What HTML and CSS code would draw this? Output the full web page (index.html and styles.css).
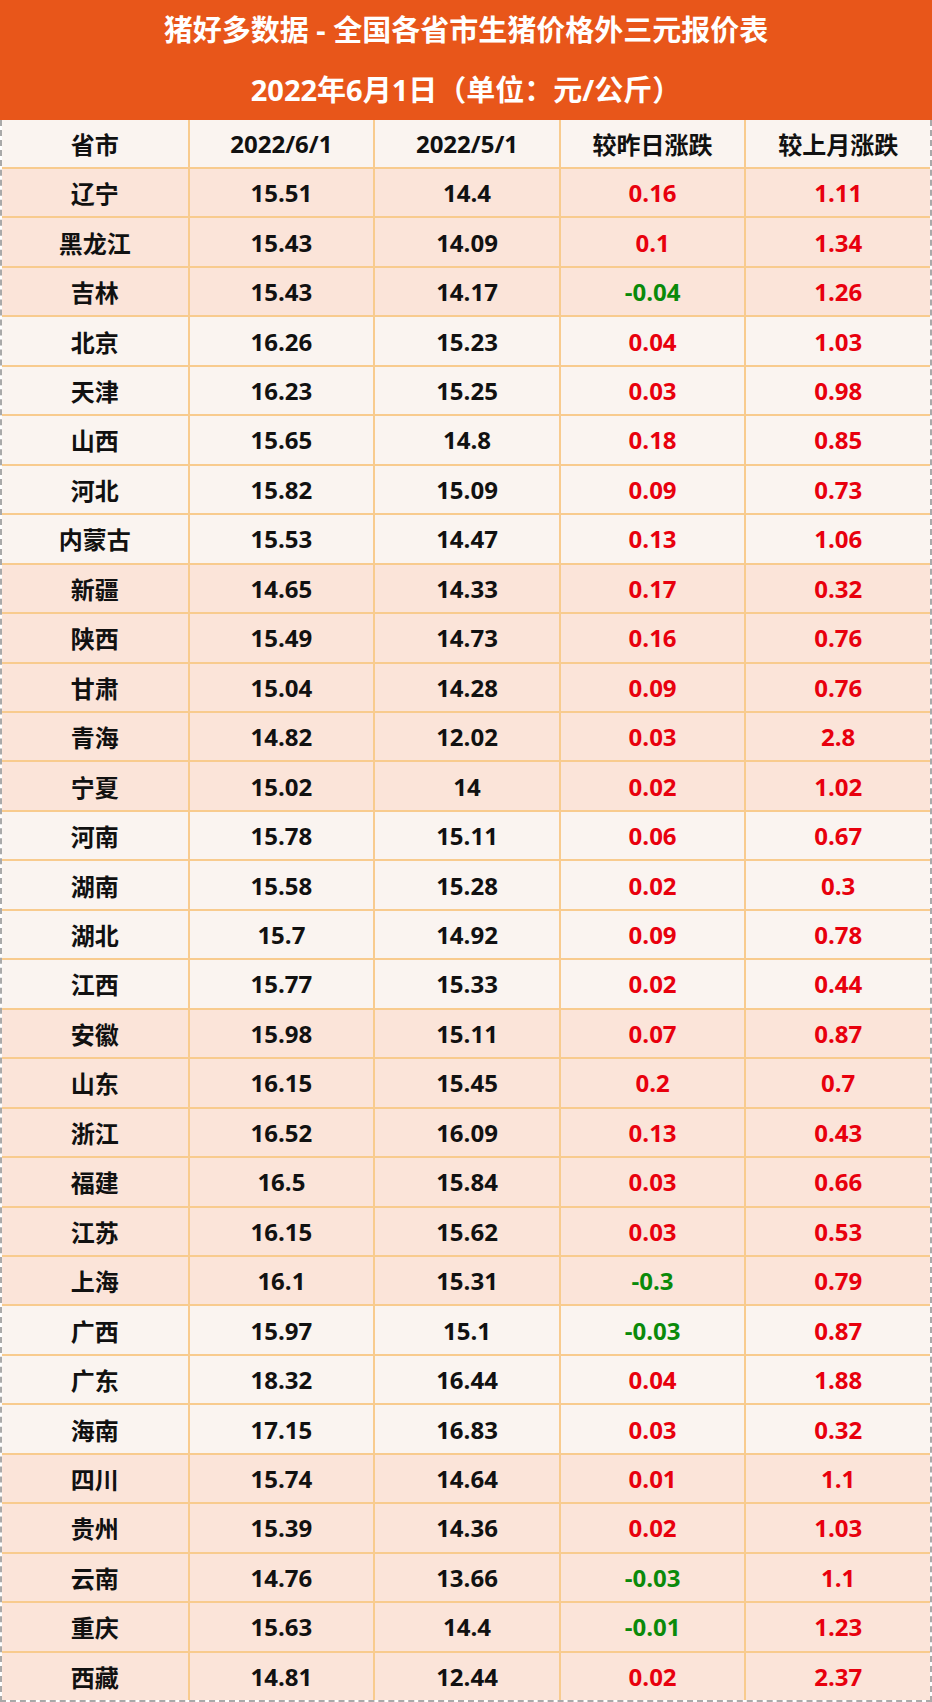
FILE: index.html
```html
<!DOCTYPE html>
<html lang="zh">
<head>
<meta charset="utf-8">
<title>猪好多数据</title>
<link rel="stylesheet" href="styles.css">
</head>
<body>
<div class="sheet">
  <div class="title">
    <div class="title-line">猪好多数据 - 全国各省市生猪价格外三元报价表</div>
    <div class="title-line">2022年6月1日（单位：元/公斤）</div>
  </div>
  <div class="table">
    <div class="row head light"><div class="cell">省市</div><div class="cell">2022/6/1</div><div class="cell">2022/5/1</div><div class="cell">较昨日涨跌</div><div class="cell">较上月涨跌</div></div>
    <div class="row data pink"><div class="cell">辽宁</div><div class="cell">15.51</div><div class="cell">14.4</div><div class="cell up">0.16</div><div class="cell up">1.11</div></div>
    <div class="row data pink"><div class="cell">黑龙江</div><div class="cell">15.43</div><div class="cell">14.09</div><div class="cell up">0.1</div><div class="cell up">1.34</div></div>
    <div class="row data pink"><div class="cell">吉林</div><div class="cell">15.43</div><div class="cell">14.17</div><div class="cell down">-0.04</div><div class="cell up">1.26</div></div>
    <div class="row data light"><div class="cell">北京</div><div class="cell">16.26</div><div class="cell">15.23</div><div class="cell up">0.04</div><div class="cell up">1.03</div></div>
    <div class="row data light"><div class="cell">天津</div><div class="cell">16.23</div><div class="cell">15.25</div><div class="cell up">0.03</div><div class="cell up">0.98</div></div>
    <div class="row data light"><div class="cell">山西</div><div class="cell">15.65</div><div class="cell">14.8</div><div class="cell up">0.18</div><div class="cell up">0.85</div></div>
    <div class="row data light"><div class="cell">河北</div><div class="cell">15.82</div><div class="cell">15.09</div><div class="cell up">0.09</div><div class="cell up">0.73</div></div>
    <div class="row data light"><div class="cell">内蒙古</div><div class="cell">15.53</div><div class="cell">14.47</div><div class="cell up">0.13</div><div class="cell up">1.06</div></div>
    <div class="row data pink"><div class="cell">新疆</div><div class="cell">14.65</div><div class="cell">14.33</div><div class="cell up">0.17</div><div class="cell up">0.32</div></div>
    <div class="row data pink"><div class="cell">陕西</div><div class="cell">15.49</div><div class="cell">14.73</div><div class="cell up">0.16</div><div class="cell up">0.76</div></div>
    <div class="row data pink"><div class="cell">甘肃</div><div class="cell">15.04</div><div class="cell">14.28</div><div class="cell up">0.09</div><div class="cell up">0.76</div></div>
    <div class="row data pink"><div class="cell">青海</div><div class="cell">14.82</div><div class="cell">12.02</div><div class="cell up">0.03</div><div class="cell up">2.8</div></div>
    <div class="row data pink"><div class="cell">宁夏</div><div class="cell">15.02</div><div class="cell">14</div><div class="cell up">0.02</div><div class="cell up">1.02</div></div>
    <div class="row data light"><div class="cell">河南</div><div class="cell">15.78</div><div class="cell">15.11</div><div class="cell up">0.06</div><div class="cell up">0.67</div></div>
    <div class="row data light"><div class="cell">湖南</div><div class="cell">15.58</div><div class="cell">15.28</div><div class="cell up">0.02</div><div class="cell up">0.3</div></div>
    <div class="row data light"><div class="cell">湖北</div><div class="cell">15.7</div><div class="cell">14.92</div><div class="cell up">0.09</div><div class="cell up">0.78</div></div>
    <div class="row data light"><div class="cell">江西</div><div class="cell">15.77</div><div class="cell">15.33</div><div class="cell up">0.02</div><div class="cell up">0.44</div></div>
    <div class="row data pink"><div class="cell">安徽</div><div class="cell">15.98</div><div class="cell">15.11</div><div class="cell up">0.07</div><div class="cell up">0.87</div></div>
    <div class="row data pink"><div class="cell">山东</div><div class="cell">16.15</div><div class="cell">15.45</div><div class="cell up">0.2</div><div class="cell up">0.7</div></div>
    <div class="row data pink"><div class="cell">浙江</div><div class="cell">16.52</div><div class="cell">16.09</div><div class="cell up">0.13</div><div class="cell up">0.43</div></div>
    <div class="row data pink"><div class="cell">福建</div><div class="cell">16.5</div><div class="cell">15.84</div><div class="cell up">0.03</div><div class="cell up">0.66</div></div>
    <div class="row data pink"><div class="cell">江苏</div><div class="cell">16.15</div><div class="cell">15.62</div><div class="cell up">0.03</div><div class="cell up">0.53</div></div>
    <div class="row data pink"><div class="cell">上海</div><div class="cell">16.1</div><div class="cell">15.31</div><div class="cell down">-0.3</div><div class="cell up">0.79</div></div>
    <div class="row data light"><div class="cell">广西</div><div class="cell">15.97</div><div class="cell">15.1</div><div class="cell down">-0.03</div><div class="cell up">0.87</div></div>
    <div class="row data light"><div class="cell">广东</div><div class="cell">18.32</div><div class="cell">16.44</div><div class="cell up">0.04</div><div class="cell up">1.88</div></div>
    <div class="row data light"><div class="cell">海南</div><div class="cell">17.15</div><div class="cell">16.83</div><div class="cell up">0.03</div><div class="cell up">0.32</div></div>
    <div class="row data pink"><div class="cell">四川</div><div class="cell">15.74</div><div class="cell">14.64</div><div class="cell up">0.01</div><div class="cell up">1.1</div></div>
    <div class="row data pink"><div class="cell">贵州</div><div class="cell">15.39</div><div class="cell">14.36</div><div class="cell up">0.02</div><div class="cell up">1.03</div></div>
    <div class="row data pink"><div class="cell">云南</div><div class="cell">14.76</div><div class="cell">13.66</div><div class="cell down">-0.03</div><div class="cell up">1.1</div></div>
    <div class="row data pink"><div class="cell">重庆</div><div class="cell">15.63</div><div class="cell">14.4</div><div class="cell down">-0.01</div><div class="cell up">1.23</div></div>
    <div class="row data pink"><div class="cell">西藏</div><div class="cell">14.81</div><div class="cell">12.44</div><div class="cell up">0.02</div><div class="cell up">2.37</div></div>
  </div>
</div>
</body>
</html>
```

FILE: styles.css
```css
html, body {
  margin: 0;
  padding: 0;
  background: #ffffff;
}
.sheet {
  width: 932px;
  height: 1702px;
  font-family: "Open Sans", "Noto Sans CJK SC", sans-serif;
  font-weight: 700;
  color: #111111;
  overflow: hidden;
}
.title {
  height: 120px;
  background: #E8561A;
  color: #ffffff;
  display: flex;
  flex-direction: column;
}
.title-line {
  height: 60px;
  line-height: 60px;
  font-size: 29px;
  text-align: center;
}
.table {
  border-left: 2px dashed #a9a9a9;
  border-right: 2px dashed #a9a9a9;
  border-bottom: 2px dashed #a9a9a9;
}
.row {
  display: grid;
  grid-template-columns: repeat(5, 1fr);
  box-sizing: border-box;
}
.row.head {
  height: 47px;
}
.row.data {
  height: 49.46px;
  border-top: 2px solid #F8CB8E;
}
.pink { background: #FBE4D9; }
.light { background: #FAF4F0; }
.cell {
  display: flex;
  align-items: center;
  justify-content: center;
  font-size: 24px;
  white-space: nowrap;
}
.cell + .cell {
  border-left: 2px solid #F8CB8E;
}
.up { color: #E8000D; }
.down { color: #0A8A0A; }
```
